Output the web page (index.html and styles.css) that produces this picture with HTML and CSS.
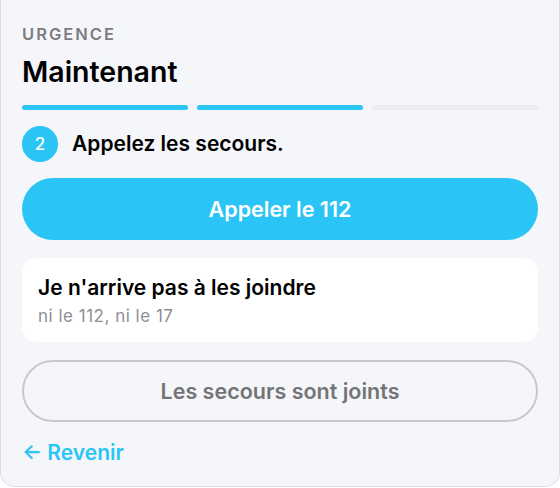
FILE: index.html
```html
<!DOCTYPE html>
<html lang="fr">
<head>
  <meta charset="UTF-8">
  <meta name="viewport" content="width=device-width, initial-scale=1.0">
  <title>Urgence</title>
  <link rel="stylesheet" href="styles.css">
</head>
<body>
  <div class="card">
    <div class="eyebrow">URGENCE</div>
    <h1 class="title">Maintenant</h1>

    <div class="progress">
      <span class="seg done"></span>
      <span class="seg done"></span>
      <span class="seg"></span>
    </div>

    <div class="step">
      <span class="step-num">2</span>
      <span class="step-text">Appelez les secours.</span>
    </div>

    <button class="btn btn-primary">Appeler le 112</button>

    <div class="option">
      <div class="option-title">Je n'arrive pas à les joindre</div>
      <div class="option-sub">ni le 112, ni le 17</div>
    </div>

    <button class="btn btn-outline">Les secours sont joints</button>

    <a class="back" href="#">&larr; Revenir</a>
  </div>
</body>
</html>
```

FILE: styles.css
```css
* {
  box-sizing: border-box;
}
body {
  margin: 0;
  font-family: Inter, "Noto Sans", Arial, sans-serif;
  background-color: #ffffff;
}
.card {
  width: 560px;
  height: 487px;
  background-color: #f5f6fa;
  border: 1px solid #dcdde1;
  border-top: none;
  border-radius: 0 0 15px 15px;
  padding: 24px 21px 0 21px;
  display: flex;
  flex-direction: column;
}
.eyebrow {
  font-size: 16.5px;
  font-weight: 600;
  letter-spacing: 2px;
  color: #7c7c80;
  line-height: 20px;
}
.title {
  margin: 11px 0 0 0;
  font-size: 28.5px;
  font-weight: 600;
  color: #000;
  line-height: 34px;
}
.progress {
  display: flex;
  gap: 9px;
  margin-top: 16px;
}
.seg {
  flex: 1;
  height: 5px;
  border-radius: 3px;
  background-color: #ebecf0;
}
.seg.done {
  background-color: #2ac5f6;
}
.step {
  display: flex;
  align-items: center;
  gap: 14px;
  margin-top: 16px;
}
.step-num {
  width: 36px;
  height: 36px;
  border-radius: 50%;
  background-color: #2ac5f6;
  color: #fff;
  font-size: 17px;
  font-weight: 500;
  display: flex;
  align-items: center;
  justify-content: center;
}
.step-text {
  font-size: 21px;
  font-weight: 600;
  color: #000;
  line-height: 26px;
}
.btn {
  width: 100%;
  height: 62px;
  border-radius: 31px;
  font-family: inherit;
  font-size: 21.5px;
  font-weight: 600;
  cursor: pointer;
}
.btn-primary {
  margin-top: 16px;
  background-color: #2ac5f6;
  color: #fff;
  border: none;
}
.option {
  margin-top: 18px;
  background-color: #fff;
  border-radius: 14px;
  padding: 17px 16px 0 16px;
  height: 84px;
}
.option-title {
  font-size: 21px;
  font-weight: 600;
  color: #000;
  line-height: 26px;
}
.option-sub {
  margin-top: 5px;
  font-size: 17px;
  letter-spacing: 0.5px;
  color: #8e8e93;
  line-height: 20px;
}
.btn-outline {
  margin-top: 18px;
  background-color: transparent;
  border: 2px solid #c9c9cd;
  color: #747476;
}
.back {
  margin-top: 18px;
  font-size: 21px;
  font-weight: 600;
  color: #2ac5f6;
  line-height: 26px;
  text-decoration: none;
}
```
